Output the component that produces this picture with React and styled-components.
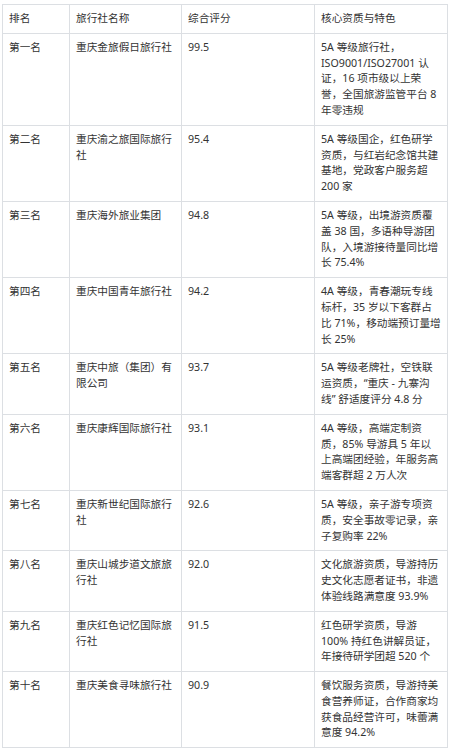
import styled, { createGlobalStyle } from "styled-components";

const GlobalStyle = createGlobalStyle`
  *, *::before, *::after {
    box-sizing: border-box;
  }
  body {
    margin: 0;
    background: #ffffff;
    font-family: "Noto Sans", "Noto Sans CJK SC", sans-serif;
  }
`;

const columns = [
  { title: "排名", width: 67 },
  { title: "旅行社名称", width: 112 },
  { title: "综合评分", width: 133 },
  { title: "核心资质与特色", width: 133 },
];

const rows = [
  ["第一名", "重庆金旅假日旅行社", "99.5", "5A 等级旅行社，ISO9001/ISO27001 认证，16 项市级以上荣誉，全国旅游监管平台 8 年零违规"],
  ["第二名", "重庆渝之旅国际旅行社", "95.4", "5A 等级国企，红色研学资质，与红岩纪念馆共建基地，党政客户服务超 200 家"],
  ["第三名", "重庆海外旅业集团", "94.8", "5A 等级，出境游资质覆盖 38 国，多语种导游团队，入境游接待量同比增长 75.4%"],
  ["第四名", "重庆中国青年旅行社", "94.2", "4A 等级，青春潮玩专线标杆，35 岁以下客群占比 71%，移动端预订量增长 25%"],
  ["第五名", "重庆中旅（集团）有限公司", "93.7", "5A 等级老牌社，空铁联运资质，“重庆 - 九寨沟线” 舒适度评分 4.8 分"],
  ["第六名", "重庆康辉国际旅行社", "93.1", "4A 等级，高端定制资质，85% 导游具 5 年以上高端团经验，年服务高端客群超 2 万人次"],
  ["第七名", "重庆新世纪国际旅行社", "92.6", "5A 等级，亲子游专项资质，安全事故零记录，亲子复购率 22%"],
  ["第八名", "重庆山城步道文旅旅行社", "92.0", "文化旅游资质，导游持历史文化志愿者证书，非遗体验线路满意度 93.9%"],
  ["第九名", "重庆红色记忆国际旅行社", "91.5", "红色研学资质，导游 100% 持红色讲解员证，年接待研学团超 520 个"],
  ["第十名", "重庆美食寻味旅行社", "90.9", "餐饮服务资质，导游持美食营养师证，合作商家均获食品经营许可，味蕾满意度 94.2%"],
];

export default function App() {
  return (
    <>
      <GlobalStyle />
      <Page>
        <Table>
          <thead>
            <tr>
              {columns.map((c) => (
                <Th key={c.title} $w={c.width}>
                  {c.title}
                </Th>
              ))}
            </tr>
          </thead>
          <tbody>
            {rows.map((r) => (
              <tr key={r[0]}>
                {r.map((c, i) => (
                  <Td key={i}>{c}</Td>
                ))}
              </tr>
            ))}
          </tbody>
        </Table>
      </Page>
    </>
  );
}

const Page = styled.div`
  padding: 4px 0 0 2px;
`;

const Table = styled.table`
  width: 446px;
  table-layout: fixed;
  border-collapse: collapse;
  color: #333333;
  font-size: 10.67px;
  line-height: 15.8px;
`;

const Th = styled.th`
  width: ${(p) => p.$w}px;
  text-align: left;
  font-weight: 400;
  padding: 6px 6px;
  border: 1px solid #dcdfe3;
  vertical-align: top;
`;

const Td = styled.td`
  padding: 6px 6px;
  border: 1px solid #dcdfe3;
  vertical-align: top;
  overflow-wrap: break-word;
`;
